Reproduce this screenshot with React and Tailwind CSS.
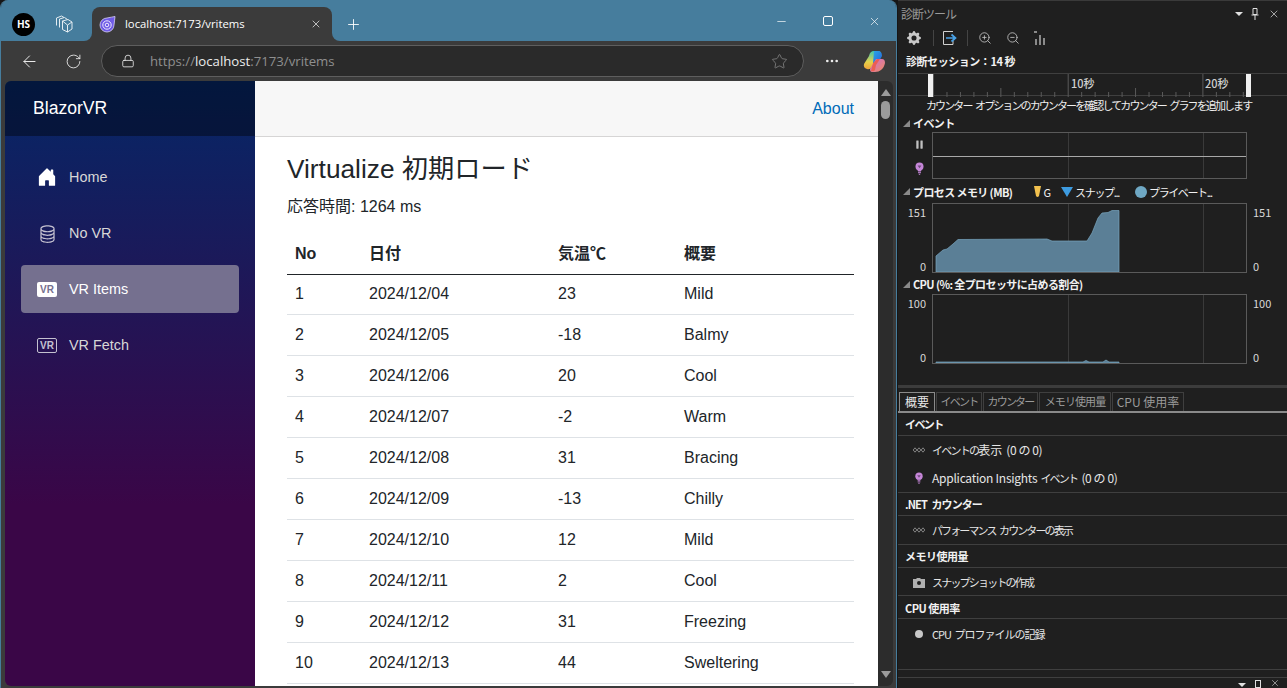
import React from "react";
import { ArrowLeft, Lock, Minus, MoreHorizontal, Pause, Plus, RotateCw, Star, X, ZoomIn, ZoomOut } from "lucide-react";
import { BsDatabase, BsGearFill, BsHouseDoorFill } from "react-icons/bs";

const rows = [
  [1, "2024/12/04", "23", "Mild"],
  [2, "2024/12/05", "-18", "Balmy"],
  [3, "2024/12/06", "20", "Cool"],
  [4, "2024/12/07", "-2", "Warm"],
  [5, "2024/12/08", "31", "Bracing"],
  [6, "2024/12/09", "-13", "Chilly"],
  [7, "2024/12/10", "12", "Mild"],
  [8, "2024/12/11", "2", "Cool"],
  [9, "2024/12/12", "31", "Freezing"],
  [10, "2024/12/13", "44", "Sweltering"],
];

const VrBadge = ({ filled }) => (
  <span
    className={
      filled
        ? "flex h-[15px] w-5 items-center justify-center rounded-[2px] bg-white text-[10px] font-bold text-[#75708f]"
        : "flex h-[15px] w-5 items-center justify-center rounded-[2px] border border-[#c4c1d0] text-[10px] font-bold text-[#c4c1d0]"
    }
  >
    VR
  </span>
);

const NavItem = ({ icon, label, active }) => (
  <div className="flex h-14 items-center px-4">
    <div
      className={
        active
          ? "flex h-12 w-full items-center gap-3 rounded-[4px] bg-[#75708f] pl-4 text-white"
          : "flex h-12 w-full items-center gap-3 pl-4 text-[#d7d7d7]"
      }
    >
      <span className="flex w-5 justify-center">{icon}</span>
      <span className="pt-[2px] text-[14.4px]">{label}</span>
    </div>
  </div>
);

const Bulb = ({ size = 13 }) => (
  <svg width={size} height={size} viewBox="0 0 13 13" fill="none">
    <circle cx="6.5" cy="4.5" r="4" fill="#c586d8" />
    <path d="M4.6 3.5 H8.4 L6.5 6.2 Z" fill="#6d4a78" />
    <path d="M4.5 8 L5.2 9.5 H7.8 L8.5 8 Z" fill="#c586d8" />
    <path d="M5 10.7 H8 M5.8 12.3 H7.2" stroke="#c586d8" />
  </svg>
);

const Dots = () => (
  <svg width="12" height="6" viewBox="0 0 12 6" fill="none" stroke="#8c8c8c" strokeWidth="0.9">
    <path d="M2 .8 L3.8 3 L2 5.2 L.2 3 Z M6 .8 L7.8 3 L6 5.2 L4.2 3 Z M10 .8 L11.8 3 L10 5.2 L8.2 3 Z" />
  </svg>
);

const Copilot = () => (
  <svg width="23" height="23" viewBox="0 0 23 23">
    <defs>
      <linearGradient id="cpa" x1="0" y1="0" x2="1" y2="1">
        <stop offset="0" stopColor="#2aa6e8" />
        <stop offset="1" stopColor="#2563d8" />
      </linearGradient>
      <linearGradient id="cpb" x1="0" y1="0" x2="1" y2="1">
        <stop offset="0" stopColor="#c86dd7" />
        <stop offset="1" stopColor="#f08a5d" />
      </linearGradient>
      <linearGradient id="cpc" x1="0" y1="0" x2="0" y2="1">
        <stop offset="0" stopColor="#3ec6b0" />
        <stop offset="0.6" stopColor="#e6d24a" />
        <stop offset="1" stopColor="#f0a33a" />
      </linearGradient>
    </defs>
    <path d="M6 6 Q7 1 11 1 H15 Q18 1 18 4 L14 9 L9 17 Q7 20 4 19 Q0 18 1 14 Z" fill="url(#cpc)" />
    <path d="M11 1 H15 Q19 1 19 6 L15 13 H10 Z" fill="url(#cpa)" />
    <path d="M13 9 H19 Q22 9 22 13 Q21 18 18 20 Q16 22 12 22 H9 Q7 22 7 19 Z" fill="url(#cpb)" />
    <path d="M10 13 L14 9 H17 L13 15 L12 20 Q11 22 8 21 Z" fill="#f0553a" opacity="0.75" />
  </svg>
);

const Square = () => <span className="block h-[10px] w-[10px] rounded-[2px] border border-white" />;

const TabBar = () => (
  <div className="flex h-[41px] items-end bg-[#467d9d]">
    <div className="flex h-[34px] w-[91px] items-center self-end pl-[11px]">
      <span className="flex h-[23px] w-[23px] items-center justify-center rounded-full bg-black text-[10px] font-bold text-white">HS</span>
      <svg className="ml-[20px]" width="18" height="18" viewBox="0 0 18 18" fill="none" stroke="#e4edf2" strokeWidth="1">
        <path d="M7.5 6 L13 4.5 L17 7 V14 L12.5 17 L7.5 14.5 Z M12.5 10 V17 M7.5 6 L12.5 10 L17 7" />
        <path d="M4.5 12.5 V4 L9.5 2.5 L12.5 4.5" />
        <path d="M1.5 10.5 V3 L6.5 1 L9 2.5" />
      </svg>
    </div>
    <div className="relative flex h-[34px] w-[240px] items-center rounded-t-[8px] bg-[#3b3b3b] pl-[7px] pr-[10px] text-white">
      <span className="absolute -left-2 bottom-0 h-2 w-2 bg-[#3b3b3b]">
        <span className="block h-2 w-2 rounded-br-[8px] bg-[#467d9d]" />
      </span>
      <span className="absolute -right-2 bottom-0 h-2 w-2 bg-[#3b3b3b]">
        <span className="block h-2 w-2 rounded-bl-[8px] bg-[#467d9d]" />
      </span>
      <svg width="17" height="17" viewBox="0 0 17 17" fill="none">
        <path d="M8 2 Q13 1 16 .5 Q15.5 5 15 9 A7 7 0 1 1 8 2 Z" fill="#6f5be6" stroke="#d8d0f8" strokeWidth="0.8" />
        <circle cx="8" cy="9" r="4.2" stroke="#efeaff" strokeWidth="1" />
        <circle cx="8" cy="9" r="1.8" stroke="#efeaff" strokeWidth="1" />
      </svg>
      <span className="ml-[9px] flex-1 font-['Open_Sans',sans-serif] text-[11.3px]">localhost:7173/vritems</span>
      <X size={12} strokeWidth={1.5} className="text-[#e8e8e8]" />
    </div>
    <div className="flex h-[34px] flex-1 items-center self-end">
      <Plus size={17} strokeWidth={1.25} className="ml-[13px] text-white" />
      <div className="flex-1" />
      <div className="mb-[6px] flex items-center gap-[35px] pr-[15px] text-white">
        <Minus size={13} strokeWidth={1.25} />
        <Square />
        <X size={13} strokeWidth={1.25} />
      </div>
    </div>
  </div>
);

const AddressBar = () => (
  <div className="flex h-10 items-center bg-[#3b3b3b] pl-[19px] pr-[10px] text-[#ececec]">
    <ArrowLeft size={19} strokeWidth={1.25} />
    <RotateCw size={17} strokeWidth={1.25} className="ml-[26px]" />
    <div className="ml-[19px] flex h-8 flex-1 items-center rounded-full border border-[#5e5e5e] bg-[#2a2a2a] pl-[19px] pr-[15px]">
      <Lock size={14} strokeWidth={1.4} />
      <span className="ml-[15px] flex-1 pt-px font-['Open_Sans',sans-serif] text-[13.2px] text-[#8f8f8f]">
        https://<span className="text-[#ececec]">localhost</span>:7173/vritems
      </span>
      <Star size={17} strokeWidth={1.1} className="text-[#8a8a8a]" />
    </div>
    <MoreHorizontal size={16} strokeWidth={2} className="ml-[20px]" />
    <span className="ml-[23px]">
      <Copilot />
    </span>
  </div>
);

const PageContent = () => (
  <div className="flex h-full min-w-0 flex-1 overflow-hidden rounded-bl-[6px] font-['Liberation_Sans','Noto_Sans_CJK_JP',sans-serif]">
    <aside className="flex w-[250px] shrink-0 flex-col rounded-tl-[6px] bg-[linear-gradient(180deg,#052767_0%,#3a0647_70%)]">
      <div className="flex h-[55px] shrink-0 items-center rounded-tl-[6px] bg-black/40 pl-7 text-[17.6px] text-white">BlazorVR</div>
      <nav className="pt-[13px]">
        <NavItem icon={<BsHouseDoorFill size={20} color="#fff" />} label="Home" />
        <NavItem icon={<BsDatabase size={19} color="#c4c1d0" />} label="No VR" />
        <NavItem icon={<VrBadge filled />} label="VR Items" active />
        <NavItem icon={<VrBadge />} label="VR Fetch" />
      </nav>
    </aside>
    <main className="flex min-w-0 flex-1 flex-col bg-white text-[#212529]">
      <div className="flex h-[56px] shrink-0 items-center justify-end border-b border-[#d6d5d5] bg-[#f7f7f7] pr-6 text-[16px] text-[#006bb7]">About</div>
      <div className="min-h-0 flex-1 overflow-hidden px-8 pt-[14px]">
        <h1 className="text-[26.25px] leading-[36px]">Virtualize 初期ロード</h1>
        <p className="mt-2 text-[16px] leading-6">応答時間: 1264 ms</p>
        <table className="mt-[14px] w-[567px] table-fixed border-collapse text-[16px]">
          <colgroup>
            <col className="w-[74px]" />
            <col className="w-[189px]" />
            <col className="w-[126px]" />
            <col className="w-[178px]" />
          </colgroup>
          <thead>
            <tr className="h-[41px] border-b border-[#212529] text-left font-bold">
              <th className="px-2 pt-[2px]">No</th>
              <th className="px-2 pt-[2px]">日付</th>
              <th className="px-2 pt-[2px]">気温℃</th>
              <th className="px-2 pt-[2px]">概要</th>
            </tr>
          </thead>
          <tbody>
            {rows.map((r) => (
              <tr key={r[0]} className={r[0] === 1 ? "h-10 border-b border-[#dee2e6]" : "h-[41px] border-b border-[#dee2e6]"}>
                <td className="px-2">{r[0]}</td>
                <td className="px-2">{r[1]}</td>
                <td className="px-2">{r[2]}</td>
                <td className="px-2">{r[3]}</td>
              </tr>
            ))}
          </tbody>
        </table>
      </div>
    </main>
    <div className="flex w-[15px] shrink-0 flex-col items-center rounded-r-[6px] bg-[#2c2c2c] pt-[8px] pb-[8px]">
      <span className="h-0 w-0 border-x-[5px] border-b-[7px] border-x-transparent border-b-[#9b9b9b]" />
      <span className="mt-[5px] h-[18px] w-[9px] rounded-full bg-[#9b9b9b]" />
      <span className="flex-1" />
      <span className="h-0 w-0 border-x-[5px] border-t-[7px] border-x-transparent border-t-[#9b9b9b]" />
    </div>
  </div>
);

const Browser = () => (
  <div className="flex h-full w-[897px] shrink-0 flex-col overflow-hidden rounded-t-[8px] border-x border-[#467d9d] bg-[#3b3b3b]">
    <TabBar />
    <AddressBar />
    <div className="min-h-0 flex-1 pb-[2px] pl-[4px] pr-[3px]">
      <PageContent />
    </div>
  </div>
);

const ticks = Array.from({ length: 24 }, (_, i) => i);

const Ruler = () => (
  <div className="relative h-[24px] border-y border-[#3f3f3f]">
    <svg className="absolute inset-0" width="389" height="23">
      {ticks.map((i) => {
        const x = 35.5 + i * 13.47;
        const major = i % 10 === 0;
        const mid = i % 5 === 0;
        return <line key={i} x1={x} x2={x} y1={major ? 0 : mid ? 14 : 18} y2={23} stroke="#5a5a5a" />;
      })}
      <rect x="30" y="0" width="5" height="23" fill="#f0f0f0" />
      <rect x="348" y="0" width="5" height="23" fill="#f0f0f0" />
    </svg>
    <span className="absolute left-[173px] top-[1px] text-[11px] font-medium leading-[16px] text-[#d0d0d0]">10秒</span>
    <span className="absolute left-[307px] top-[1px] text-[11px] font-medium leading-[16px] text-[#d0d0d0]">20秒</span>
  </div>
);

const SectionHead = ({ children, className }) => (
  <div className={"flex items-center " + (className || "")}>
    <span className="ml-[5px] mr-[3px] h-0 w-0 border-b-[7px] border-l-[7px] border-b-[#8a8a8a] border-l-transparent" />
    <span className="text-[11px] font-bold tracking-[-0.6px] text-[#f1f1f1]">{children}</span>
  </div>
);

const ChartFrame = ({ height, left, right, children }) => (
  <div className="flex items-stretch">
    <div className="flex w-[34px] flex-col justify-between pb-[1px] pr-[6px] pt-[3px] text-right text-[11px] leading-[12px] text-[#d8d8d8]">
      {left}
    </div>
    <div className="relative w-[315px] border border-[#5a5a5a]" style={{ height }}>
      <svg className="absolute inset-0" width="313" height={height - 2}>
        <line x1="135.5" x2="135.5" y1="0" y2={height} stroke="#3a3a3a" />
        <line x1="270.5" x2="270.5" y1="0" y2={height} stroke="#3a3a3a" />
        {children}
      </svg>
    </div>
    <div className="flex flex-col justify-between pb-[1px] pl-[6px] pt-[3px] text-[11px] leading-[12px] text-[#d8d8d8]">{right}</div>
  </div>
);

const TabItem = ({ label, w, active, className }) => (
  <div
    className={
      (active
        ? "flex h-[19px] shrink-0 items-center justify-center border border-b-0 border-[#8a8a8a] text-[#e8e8e8] "
        : "flex h-[19px] shrink-0 items-center justify-center border border-b-0 border-[#3f3f3f] text-[#9a9a9a] ") + className
    }
    style={{ width: w }}
  >
    {label}
  </div>
);

const ListHead = ({ children, h, className }) => (
  <div className={"flex items-center border-b border-[#3f3f3f] pl-[7px] text-[11px] font-bold text-[#f1f1f1] " + (className || "")} style={{ height: h }}>
    {children}
  </div>
);

const ListRow = ({ icon, children, h, className }) => (
  <div className={"flex items-center text-[11px] text-[#e6e6e6] " + (className || "")} style={{ height: h }}>
    <span className="flex w-[34px] shrink-0 justify-center pl-[7px]">{icon}</span>
    <span>{children}</span>
  </div>
);

const Kana = ({ children }) => <span className="tracking-[-1.75px]">{children}</span>;
const Count = ({ className }) => <span className={"ml-[4px] text-[12px] tracking-[-0.4px] " + (className || "")}>(0 の 0)</span>;

const Diagnostics = () => (
  <div className="ml-[1px] flex h-full min-w-0 flex-1 flex-col bg-[#1f1f1f] font-['Noto_Sans_CJK_JP','Open_Sans',sans-serif] text-[#f1f1f1]">
    <div className="flex h-[28px] items-center border-t border-[#3a3a3a] pl-[3px] pr-[7px] text-[#9a9a9a]">
      <span className="flex-1 text-[12px] tracking-[-1px]">診断ツール</span>
      <span className="mr-[8px] h-0 w-0 border-x-[4px] border-t-[4px] border-x-transparent border-t-[#e0e0e0]" />
      <svg className="mr-[9px]" width="8" height="12" viewBox="0 0 8 12" fill="none" stroke="#e0e0e0">
        <path d="M2 .5 h4 v6 h-4 z M.5 7 h7 M4 7 v5" />
      </svg>
      <X size={12} strokeWidth={1.5} className="text-[#d0d0d0]" />
    </div>
    <div className="flex h-[22px] items-center pb-[2px] pl-[9px] text-[#c8c8c8]">
      <BsGearFill size={14} />
      <span className="ml-[12px] h-[16px] w-px bg-[#444]" />
      <svg className="ml-[8px]" width="16" height="16" viewBox="0 0 16 16" fill="none">
        <path d="M11 1.5 H1.5 V14.5 H11 V11" stroke="#d0d0d0" />
        <path d="M4 8 H13 M9.5 4.5 L13.5 8 L9.5 11.5" stroke="#4aa3e8" strokeWidth="1.7" />
      </svg>
      <span className="ml-[9px] h-[16px] w-px bg-[#444]" />
      <ZoomIn size={14} strokeWidth={1.4} className="ml-[10px]" />
      <ZoomOut size={14} strokeWidth={1.4} className="ml-[14px]" />
      <svg className="ml-[13px]" width="14" height="15" viewBox="0 0 14 15" fill="#8a8a8a">
        <rect x="2" y="9" width="2" height="6" />
        <rect x="6" y="5" width="2" height="10" />
        <rect x="10" y="8" width="2" height="7" />
        <rect x="1" y="1" width="3" height="2" />
      </svg>
    </div>
    <div className="flex h-[23px] items-center pl-[8px] text-[11px] font-bold tracking-[-0.45px]">診断セッション：14 秒</div>
    <Ruler />
    <div className="flex h-[18px] items-center pl-[28px] text-[11px] tracking-[-1.9px] text-[#eeeeee] [word-spacing:3px]">カウンター オプションのカウンターを確認してカウンター グラフを追加します</div>
    <SectionHead className="h-[18px]">イベント</SectionHead>
    <div className="flex h-[47px] items-stretch">
      <div className="flex w-[34px] flex-col items-center justify-between pb-[4px] pl-[8px] pt-[7px] text-[#c0c0c0]">
        <Pause size={11} fill="#c0c0c0" stroke="none" />
        <Bulb />
      </div>
      <div className="relative w-[315px] border border-[#5a5a5a]">
        <svg className="absolute inset-0" width="313" height="45">
          <line x1="135.5" x2="135.5" y1="0" y2="45" stroke="#3a3a3a" />
          <line x1="270.5" x2="270.5" y1="0" y2="45" stroke="#3a3a3a" />
          <line x1="0" x2="313" y1="23.5" y2="23.5" stroke="#a8a8a8" />
        </svg>
      </div>
    </div>
    <div className="flex h-[24px] items-center pt-[2px]">
      <SectionHead>プロセス メモリ (MB)</SectionHead>
      <svg className="ml-[22px]" width="7" height="12" viewBox="0 0 7 12">
        <path d="M0 0 H7 L5 10 Q3.5 12 2 10 Z" fill="#f2c14e" />
      </svg>
      <span className="ml-[2px] text-[11px]">G</span>
      <span className="ml-[10px] h-0 w-0 border-x-[6px] border-t-[10px] border-x-transparent border-t-[#3d9be0]" />
      <span className="ml-[2px] text-[11px] tracking-[-1.3px]">スナップ...</span>
      <span className="ml-[16px] h-[12px] w-[12px] rounded-full bg-[#6fa8c4]" />
      <span className="ml-[2px] text-[11px] tracking-[-1.4px]">プライベート...</span>
    </div>
    <ChartFrame
      height={70}
      left={
        <>
          <span>151</span>
          <span>0</span>
        </>
      }
      right={
        <>
          <span>151</span>
          <span>0</span>
        </>
      }
    >
      <polygon
        points="3,68 3,52 10,46 14,45 20,40 25,35.5 114,35 119,37 154,37 159,29 165,14 169,9 175,8.5 179,6.5 186,6.5 186,68"
        fill="#5b7f96"
        stroke="#78a6c0"
        strokeWidth="0.7"
      />
    </ChartFrame>
    <SectionHead className="h-[21px] pt-[2px]">CPU (%: 全プロセッサに占める割合)</SectionHead>
    <ChartFrame
      height={70}
      left={
        <>
          <span>100</span>
          <span>0</span>
        </>
      }
      right={
        <>
          <span>100</span>
          <span>0</span>
        </>
      }
    >
      <polygon
        points="3,68 3,67 150,67 153,65.5 156,67 170,67 173,65 176,67 186,67 186,68"
        fill="#5b7f96"
        stroke="#78a6c0"
        strokeWidth="0.7"
      />
    </ChartFrame>
    <div className="h-[21px]" />
    <div className="h-[3px] bg-[#3c3c3c]" />
    <div className="flex h-[4px]" />
    <div className="flex gap-[1px] pl-[1px]">
      <TabItem label="概要" w={36} active className="text-[12px]" />
      <TabItem label="イベント" w={46} className="text-[11px] tracking-[-1.75px]" />
      <TabItem label="カウンター" w={55} className="text-[11px] tracking-[-1.8px]" />
      <TabItem label="メモリ使用量" w={72} className="text-[11px] tracking-[-0.9px]" />
      <TabItem label="CPU 使用率" w={72} className="text-[12px]" />
    </div>
    <div className="h-[2px] bg-[#8a8a8a]" />
    <ListHead h={24} className="tracking-[-1.6px]">イベント</ListHead>
    <ListRow h={28} icon={<Dots />}>
      <Kana>イベントの</Kana>
      <span className="text-[12px]">表示</span>
      <Count />
    </ListRow>
    <ListRow h={28} icon={<Bulb size={12} />}>
      <span className="text-[12px] tracking-[-0.25px]">Application Insights</span>
      <span className="ml-[3px]">
        <Kana>イベント</Kana>
      </span>
      <Count className="ml-[2px]" />
    </ListRow>
    <div className="h-px bg-[#3f3f3f]" />
    <ListHead h={23} className="tracking-[-0.9px] [word-spacing:3px]">.NET カウンター</ListHead>
    <ListRow h={28} icon={<Dots />} className="tracking-[-1.9px] [word-spacing:3px]">パフォーマンス カウンターの表示</ListRow>
    <div className="h-px bg-[#3f3f3f]" />
    <ListHead h={23} className="pt-[2px] tracking-[-0.5px]">メモリ使用量</ListHead>
    <ListRow
      h={28}
      className="pt-[2px] tracking-[-1.8px]"
      icon={
        <svg width="12" height="10" viewBox="0 0 12 10">
          <path d="M0 1h3l1-1h3l1 1h4v9H0z" fill="#b0b0b0" />
          <circle cx="6" cy="5" r="2" fill="#1f1f1f" />
        </svg>
      }
    >
      スナップショットの作成
    </ListRow>
    <div className="h-px bg-[#3f3f3f]" />
    <ListHead h={23} className="pt-[2px] tracking-[-0.5px]">CPU 使用率</ListHead>
    <ListRow h={30} className="tracking-[-1px] [word-spacing:2px]" icon={<span className="block h-2 w-2 rounded-full bg-[#c8c8c8]" />}>
      CPU プロファイルの記録
    </ListRow>
    <div className="h-[21px] border-b border-[#3f3f3f]" />
    <div className="flex h-[7px]" />
    <div className="flex h-[11px] items-end justify-end gap-[9px] border-t border-[#3f3f3f] pr-[7px]">
      <span className="mb-[1px] h-0 w-0 border-x-[4px] border-t-[4px] border-x-transparent border-t-[#e0e0e0]" />
      <span className="h-[8px] w-[6px] border border-[#e0e0e0]" />
      <X size={10} strokeWidth={1.5} className="text-[#d0d0d0]" />
    </div>
  </div>
);

export default function App() {
  return (
    <div className="flex h-[688px] w-[1287px] overflow-hidden bg-[#161616]">
      <Browser />
      <Diagnostics />
    </div>
  );
}
